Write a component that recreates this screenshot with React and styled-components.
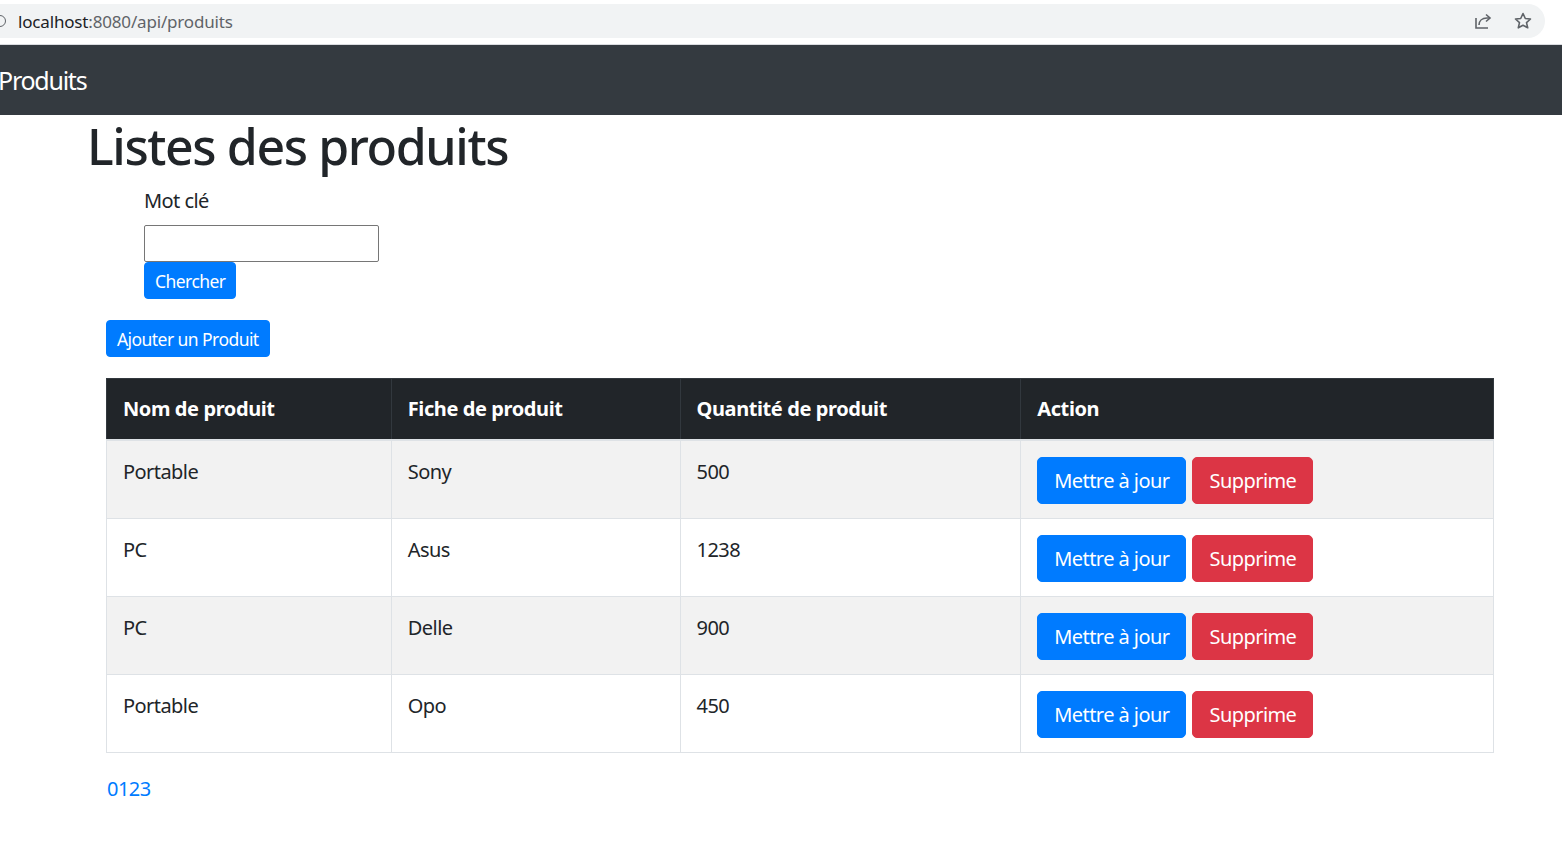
import React from "react";
import styled, { createGlobalStyle } from "styled-components";

const Global = createGlobalStyle`
  html, body { margin: 0; padding: 0; background: #fff; }
  body { font-family: "Noto Sans", "Open Sans", sans-serif; color: #212529; letter-spacing: -0.56px; }
  * { box-sizing: border-box; }
`;

const Chrome = styled.div`
  height: 45px;
  background: #fff;
  border-bottom: 1px solid #dadce0;
  padding: 4px 17px 6px 0;
  display: flex;
`;

const Omnibox = styled.div`
  flex: 1;
  background: #f1f3f4;
  border-radius: 0 18px 18px 0;
  display: flex;
  align-items: center;
  padding: 0 12px 0 0;
  font-size: 17px;
  gap: 12px;
  letter-spacing: -0.17px;
`;

const InfoDot = styled.span`
  width: 12px;
  height: 12px;
  border: 1.6px solid #5f6368;
  border-radius: 50%;
  margin-left: -6px;
`;

const Url = styled.span`
  color: #5f6368;
  flex: 1;
  b { font-weight: 400; color: #202124; }
`;

const ChromeIcon = styled.svg`
  width: 20px;
  height: 20px;
  margin-left: ${p => p.$ml || 0}px;
  fill: none;
  stroke: #5f6368;
  stroke-width: 1.6;
`;

const Navbar = styled.nav`
  height: 70px;
  background: #343a40;
  display: flex;
  align-items: center;
`;

const Brand = styled.span`
  color: #fff;
  font-size: 25px;
  letter-spacing: -1.25px;
  margin-left: -2px;
`;

const Container = styled.main`
  padding: 0 68px 0 87px;
`;

const Title = styled.h1`
  font-size: 50px;
  font-weight: 500;
  line-height: 60px;
  letter-spacing: -1.4px;
  margin: 1px 0 10px;
  color: #212529;
`;

const SearchForm = styled.form`
  margin-left: 57px;
  display: flex;
  flex-direction: column;
  align-items: flex-start;
`;

const Label = styled.label`
  font-size: 20px;
  line-height: 30px;
  margin-bottom: 9px;
`;

const Input = styled.input`
  width: 235px;
  height: 37px;
  border: 1px solid #767676;
  border-radius: 2px;
  font-size: 17px;
  padding: 2px 4px;
`;

const Button = styled.button`
  font-family: inherit;
  letter-spacing: inherit;
  border: 1px solid ${p => (p.$variant === "danger" ? "#dc3545" : "#007bff")};
  background: ${p => (p.$variant === "danger" ? "#dc3545" : "#007bff")};
  color: #fff;
  font-size: ${p => (p.$small ? "17.5px" : "20px")};
  line-height: ${p => (p.$small ? "26px" : "30px")};
  padding: ${p => (p.$small ? "4.5px 10px" : "7.5px 16px")};
  border-radius: ${p => (p.$small ? "4px" : "5px")};
  cursor: pointer;
`;

const AddRow = styled.div`
  margin: 21px 0 21px 19px;
`;

const Table = styled.table`
  margin-left: 19px;
  width: 1388px;
  border-collapse: collapse;
  font-size: 20px;
  line-height: 30px;
`;

const Th = styled.th`
  background: #212529;
  color: #fff;
  text-align: left;
  font-weight: 700;
  letter-spacing: -0.4px;
  padding: 15px 16px;
  border: 1px solid #32383e;
  border-bottom: 2px solid #dee2e6;
  width: ${p => p.$w}px;
`;

const Tr = styled.tr`
  background: ${p => (p.$striped ? "#f2f2f2" : "#fff")};
`;

const Td = styled.td`
  padding: 16px 16px 14px;
  border: 1px solid #dee2e6;
  vertical-align: top;
`;

const Actions = styled.div`
  display: flex;
  gap: 6px;
`;

const Pager = styled.div`
  margin: 21px 0 0 20px;
  font-size: 20px;
  line-height: 30px;
  a { color: #007bff; text-decoration: none; }
`;

const rows = [
  ["Portable", "Sony", "500"],
  ["PC", "Asus", "1238"],
  ["PC", "Delle", "900"],
  ["Portable", "Opo", "450"],
];

export default function App() {
  return (
    <>
      <Global />
      <Chrome>
        <Omnibox>
          <InfoDot />
          <Url><b>localhost</b>:8080/api/produits</Url>
          <ChromeIcon viewBox="0 0 20 20">
            <path d="M3 7v10h12" />
            <path d="M6 14c0-4 3-7 8-7h2" />
            <path d="M13 3.5l4 3.5-4 3.5" />
          </ChromeIcon>
          <ChromeIcon $ml={8} viewBox="0 0 20 20">
            <path d="M10 2.5l2.3 5 5.2.5-4 3.6 1.2 5.2L10 14.2 5.3 16.8l1.2-5.2-4-3.6 5.2-.5z" strokeLinejoin="round" />
          </ChromeIcon>
        </Omnibox>
      </Chrome>
      <Navbar>
        <Brand>Produits</Brand>
      </Navbar>
      <Container>
        <Title>Listes des produits</Title>
        <SearchForm onSubmit={e => e.preventDefault()}>
          <Label>Mot clé</Label>
          <Input type="text" />
          <Button $small type="submit">Chercher</Button>
        </SearchForm>
        <AddRow>
          <Button $small>Ajouter un Produit</Button>
        </AddRow>
        <Table>
          <thead>
            <tr>
              <Th $w={285}>Nom de produit</Th>
              <Th $w={289}>Fiche de produit</Th>
              <Th $w={341}>Quantité de produit</Th>
              <Th $w={473}>Action</Th>
            </tr>
          </thead>
          <tbody>
            {rows.map((r, i) => (
              <Tr key={i} $striped={i % 2 === 0}>
                <Td>{r[0]}</Td>
                <Td>{r[1]}</Td>
                <Td>{r[2]}</Td>
                <Td>
                  <Actions>
                    <Button>Mettre à jour</Button>
                    <Button $variant="danger">Supprime</Button>
                  </Actions>
                </Td>
              </Tr>
            ))}
          </tbody>
        </Table>
        <Pager>
          <a href="#">0</a><a href="#">1</a><a href="#">2</a><a href="#">3</a>
        </Pager>
      </Container>
    </>
  );
}
